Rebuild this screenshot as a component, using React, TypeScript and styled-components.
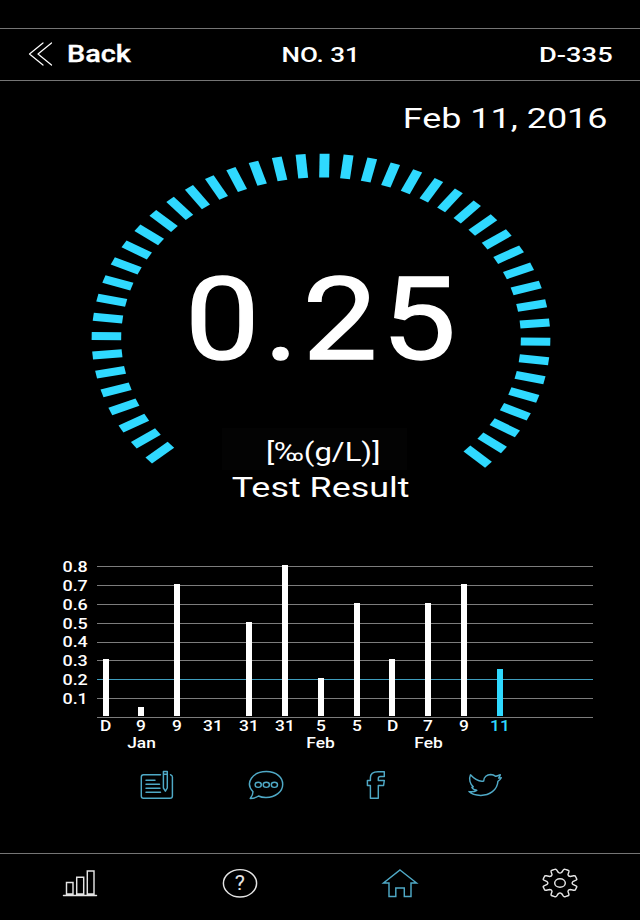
import React from "react";
import styled, { createGlobalStyle, css } from "styled-components";

const CYAN = "#2fd9ff";
const TEAL = "#4fa9c6";
const LINE = "#757575";

const GlobalStyle = createGlobalStyle`
  * { box-sizing: border-box; }
  html, body { margin: 0; background: #000; }
  body { font-family: Roboto, "Liberation Sans", sans-serif; color: #fff; }
`;

const Screen = styled.main`
  width: 640px;
  height: 920px;
  padding-top: 28px;
  display: flex;
  flex-direction: column;
  overflow: hidden;
  background: #000;
`;

/* Text drawn wider than its natural shape. */
const Wide = styled.span<{
  $size: number;
  $scale?: number;
  $weight?: number;
  $from?: "left" | "center" | "right";
  $spacing?: number;
  $stroke?: number;
}>`
  display: block;
  white-space: nowrap;
  font-size: ${(p) => p.$size}px;
  font-weight: ${(p) => p.$weight ?? 400};
  letter-spacing: ${(p) => p.$spacing ?? 0}px;
  -webkit-text-stroke: ${(p) => p.$stroke ?? 0}px currentColor;
  transform: scaleX(${(p) => p.$scale ?? 1.24});
  transform-origin: ${(p) => p.$from ?? "center"} center;
`;

const Header = styled.header`
  height: 53px;
  flex: none;
  display: grid;
  grid-template-columns: 1fr auto 1fr;
  align-items: center;
  padding: 0 27px 0 28px;
  border-top: 1px solid ${LINE};
  border-bottom: 1px solid ${LINE};
  line-height: 30px;
`;

const BackButton = styled.button`
  display: flex;
  align-items: center;
  gap: 13px;
  padding: 0;
  border: 0;
  background: none;
  color: inherit;
  font-family: inherit;
  line-height: 30px;
`;

const Device = styled.div`
  justify-self: end;
`;

const DateRow = styled.div`
  height: 57px;
  flex: none;
  display: flex;
  justify-content: flex-end;
  padding: 18px 33px 0 0;
  line-height: 40px;
`;

const Gauge = styled.section`
  height: 412px;
  flex: none;
  display: grid;
  grid-template: 1fr / 1fr;
  > * { grid-area: 1 / 1; }
`;

const Readout = styled.div`
  display: flex;
  flex-direction: column;
  align-items: center;
  padding-top: 122px;
`;

const Value = styled.div`
  height: 120px;
  padding-left: 6px;
  line-height: 120px;
`;

const Unit = styled.div`
  width: 185px;
  height: 42px;
  margin: 48px 12px 0 0;
  padding-left: 18px;
  display: flex;
  justify-content: center;
  line-height: 49px;
  background: #030303;
`;

const Caption = styled.div`
  height: 36px;
  padding-left: 1px;
  line-height: 36px;
`;

const Chart = styled.section`
  height: 212px;
  flex: none;
  display: grid;
  grid-template-columns: 97px 496px;
  grid-template-rows: 167px 17px 17px;
  font-weight: 500;
`;

const Scale = styled.div`
  display: flex;
  flex-direction: column;
  align-items: flex-end;
  padding: 8px 9px 0 0;
`;

const Tick = styled.div`
  height: 18.85px;
  line-height: 19px;
`;

const Plot = styled.div`
  height: 168px;
  display: grid;
  grid-template: 1fr / 1fr;
  > * { grid-area: 1 / 1; }
`;

const Lines = styled.div`
  display: flex;
  flex-direction: column;
  justify-content: space-between;
  padding-top: 16px;
`;

const GridLine = styled.i<{ $limit?: boolean }>`
  height: 1px;
  background: ${(p) => (p.$limit ? "#3f9dbd" : "#7c7c7c")};
`;

const columns = css`
  display: grid;
  grid-template-columns: repeat(12, 35.85px);
  margin-left: -9.3px;
`;

const Bars = styled.div`
  ${columns}
  align-items: end;
  justify-items: center;
  padding-bottom: 2px;
`;

const Bar = styled.i<{ $value: number; $current?: boolean }>`
  width: 6px;
  height: ${(p) => p.$value * 188.5}px;
  background: ${(p) => (p.$current ? CYAN : "#fff")};
`;

const Labels = styled.div`
  ${columns}
  grid-column: 2;
  justify-items: center;
  line-height: 18px;
`;

const DayLabel = styled.div<{ $current?: boolean }>`
  color: ${(p) => (p.$current ? CYAN : "#fff")};
`;

const Share = styled.div`
  height: 46px;
  flex: none;
  display: grid;
  grid-template-columns: repeat(4, 109.3px);
  justify-content: center;
  justify-items: center;
  align-items: center;
  padding-left: 2px;
  color: ${TEAL};
`;

const NavBar = styled.nav`
  margin-top: 45px;
  height: 67px;
  flex: none;
  display: grid;
  grid-template-columns: repeat(4, 1fr);
  justify-items: center;
  padding-top: 11px;
  border-top: 1px solid ${LINE};
`;

const IconButton = styled.button<{ $active?: boolean }>`
  width: 40px;
  height: 36px;
  padding: 0;
  border: 0;
  background: none;
  font-family: inherit;
  color: ${(p) => (p.$active ? TEAL : "#e4e4e4")};
`;

const HelpMark = styled.span`
  height: 36px;
  display: grid;
  place-items: center;
  > * { grid-area: 1 / 1; }
`;

const Glyph = styled.svg`
  display: block;
  fill: none;
  stroke: currentColor;
  stroke-width: 1.45;
  stroke-linejoin: round;
  stroke-linecap: round;
`;

const Chevrons = styled(Glyph)`
  margin-top: -2px;
  stroke-width: 1.2;
`;

const Icon = ({ children }: { children: React.ReactNode }) => (
  <Glyph width="40" height="36" viewBox="0 0 40 36">
    {children}
  </Glyph>
);

const TICKS = Array.from({ length: 45 }, (_, i) => -131.3 + i * 6.009);

const days: { day: string; value: number; month?: string }[] = [
  { day: "D", value: 0.3 },
  { day: "9", value: 0.05, month: "Jan" },
  { day: "9", value: 0.7 },
  { day: "31", value: 0 },
  { day: "31", value: 0.5 },
  { day: "31", value: 0.8 },
  { day: "5", value: 0.2, month: "Feb" },
  { day: "5", value: 0.6 },
  { day: "D", value: 0.3 },
  { day: "7", value: 0.6, month: "Feb" },
  { day: "9", value: 0.7 },
  { day: "11", value: 0.25 },
];

const levels = ["0.8", "0.7", "0.6", "0.5", "0.4", "0.3", "0.2", "0.1"];

const GEAR = Array.from({ length: 8 }, (_, i) => {
  const at = (deg: number, r: number) => {
    const a = ((deg + i * 45 - 90) * Math.PI) / 180;
    return `${(20 + Math.cos(a) * r * 1.22).toFixed(2)} ${(18 + Math.sin(a) * r).toFixed(2)}`;
  };
  return `${i ? "L" : "M"}${at(-7, 10.6)} Q${at(0, 9.4)} ${at(7, 10.6)} L${at(12, 13.4)} Q${at(14, 14.6)} ${at(18, 14.3)} L${at(27, 14.3)} Q${at(31, 14.6)} ${at(33, 13.4)} L${at(38, 10.6)}`;
}).join(" ") + "Z";

export default function App() {
  return (
    <>
      <GlobalStyle />
      <Screen>
        <Header>
          <BackButton>
            <Chevrons width="26" height="26" viewBox="0 0 26 26">
              <path d="M15 2 1.5 13 15 24M23.5 2 10 13 23.5 24" />
            </Chevrons>
            <Wide $size={23} $weight={500} $from="left" $scale={1.255} $stroke={0.3}>Back</Wide>
          </BackButton>
          <Wide $size={21} $weight={500}>NO. 31</Wide>
          <Device>
            <Wide $size={21} $weight={500} $from="right" $scale={1.3}>D-335</Wide>
          </Device>
        </Header>

        <DateRow>
          <Wide $size={28.5} $from="right" $scale={1.26}>Feb 11, 2016</Wide>
        </DateRow>

        <Gauge>
          <svg width="640" height="412" viewBox="0 138 640 412">
            <g transform="translate(321 338.5) scale(1.241 1)" fill={CYAN}>
              {TICKS.map((a) => (
                <rect key={a} x="-4" y="-184.8" width="8" height="23.8" transform={`rotate(${a})`} />
              ))}
            </g>
          </svg>
          <Readout>
            <Value>
              <Wide $size={115.5} $scale={1.15} $spacing={3.5} $stroke={1.4}>0.25</Wide>
            </Value>
            <Unit>
              <Wide $size={25}>[‰(g/L)]</Wide>
            </Unit>
            <Caption>
              <Wide $size={28.5} $scale={1.26}>Test Result</Wide>
            </Caption>
          </Readout>
        </Gauge>

        <Chart>
          <Scale>
            {levels.map((l) => (
              <Tick key={l}>
                <Wide $size={14} $weight={500} $from="right" $scale={1.28}>{l}</Wide>
              </Tick>
            ))}
          </Scale>
          <Plot>
            <Lines>
              {[...levels, "0"].map((l) => (
                <GridLine key={l} $limit={l === "0.2"} />
              ))}
            </Lines>
            <Bars>
              {days.map((d, i) => (
                <Bar key={i} $value={d.value} $current={i === 11} />
              ))}
            </Bars>
          </Plot>
          <Labels>
            {days.map((d, i) => (
              <DayLabel key={i} $current={i === 11}>
                <Wide $size={14} $weight={500}>{d.day}</Wide>
              </DayLabel>
            ))}
          </Labels>
          <Labels>
            {days.map((d, i) => (
              <DayLabel key={i}>
                <Wide $size={14} $weight={500}>{d.month}</Wide>
              </DayLabel>
            ))}
          </Labels>
        </Chart>

        <Share>
          <Icon>
            <path d="M23.5 7.7H6.5Q4.3 7.7 4.3 10V29Q4.3 31.3 6.5 31.3H33Q35.4 31.3 35.4 29V10Q35.4 8.3 33.5 7.7M9 13.3H18M9 17.3H22.5M9 21.3H23M9 25.3H23.5" />
            <path d="M26.4 4.5H30.3V21L28.4 24.2 26.4 21ZM26.4 7.3H30.3" />
          </Icon>
          <Icon>
            <path d="M7 24.8C-1.6 15.5 7 4.6 20.3 4.6C30.5 4.6 36.7 10.5 36.7 17.4C36.7 24.5 29.5 30.6 19.8 30.5C16.8 30.5 14.5 30 12.5 29C10.6 30.5 7.5 31.4 4.2 31.4C6 29.4 7 27.4 7 24.8Z" />
            <ellipse cx="12.2" cy="17.8" rx="3.1" ry="2.6" />
            <ellipse cx="20.3" cy="17.8" rx="3.1" ry="2.6" />
            <ellipse cx="28.4" cy="17.8" rx="3.1" ry="2.6" />
          </Icon>
          <Icon>
            <path d="M14.4 31.3V18.5H11.4V13.5H14.4V10.8C14.4 6.8 17.5 4.7 22 4.7H28.3V9.4H24.5C22.8 9.4 22.3 10 22.3 11.5V13.5H28.3L27.6 18.5H22.3V31.3Z" />
          </Icon>
          <Icon>
            <path d="M5.5 7.8C8.8 11.5 13 15 18.7 14C18.7 10 22 7.5 25.7 7.5C28 7.6 29.5 8.4 30.8 9.3C32.3 8.9 33.7 8.3 35.3 7.8C35 9.3 34 10.3 33.6 11.1L36.3 10.8C35.5 12.4 34.2 13.5 32.9 14.3C32.5 23.2 24.3 28.4 15.8 28.4C10.5 28.4 6.5 27.2 4 24.6C7 25 9.5 24.8 11.8 23.3C9 22.8 7.6 22 6.8 20.3L8.3 19.8C5 17 3.6 12 5.5 7.8Z" />
          </Icon>
        </Share>

        <NavBar>
          <IconButton aria-label="Statistics">
            <Icon>
              <path d="M3.5 30.5H36.5M6.5 29V17.5H13V29ZM16.7 29V12.3H23.7V29ZM27.3 29V6H34V29Z" strokeLinejoin="miter" />
            </Icon>
          </IconButton>
          <IconButton aria-label="Help">
            <HelpMark>
              <Icon>
                <ellipse cx="20" cy="18.3" rx="16.6" ry="13.7" />
              </Icon>
              <Wide $size={20.5} $scale={1.05}>?</Wide>
            </HelpMark>
          </IconButton>
          <IconButton $active aria-label="Home">
            <Icon>
              <path d="M20 5 36.5 18H31V31.5H24.3V23H15.8V31.5H9V18H3.5Z" strokeLinejoin="miter" />
            </Icon>
          </IconButton>
          <IconButton aria-label="Settings">
            <Icon>
              <path d={GEAR} />
              <ellipse cx="20" cy="18" rx="5.3" ry="4.3" />
            </Icon>
          </IconButton>
        </NavBar>
      </Screen>
    </>
  );
}
